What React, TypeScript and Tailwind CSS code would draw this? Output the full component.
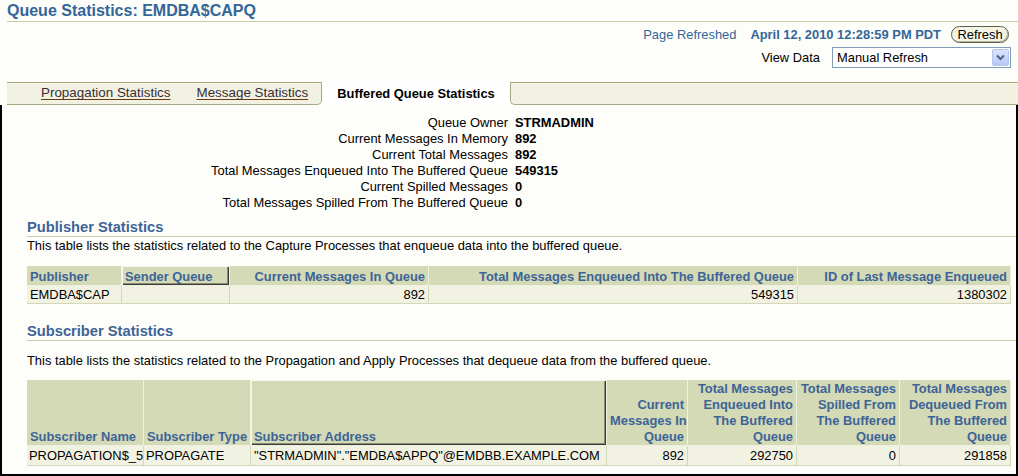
import React from "react";

const infoRows: [string, string][] = [
  ["Queue Owner", "STRMADMIN"],
  ["Current Messages In Memory", "892"],
  ["Current Total Messages", "892"],
  ["Total Messages Enqueued Into The Buffered Queue", "549315"],
  ["Current Spilled Messages", "0"],
  ["Total Messages Spilled From The Buffered Queue", "0"],
];

const th =
  "bg-[#d4d9b6] text-[#3d6497] font-bold px-[3px] border-r border-b border-[#eef0e0] align-bottom leading-[16px] whitespace-nowrap overflow-hidden";
const thRaised =
  "shadow-[inset_1px_1px_0_#f8f8f0,inset_-1px_-1px_0_#3a3a3a,inset_-2px_-2px_0_#8c8c74]";
const td =
  "bg-[#f2f2e2] px-[3px] border-r border-b border-[#d3d8b8] leading-[16px] whitespace-nowrap overflow-hidden";

function SectionHeading({ title }: { title: string }) {
  return (
    <div className="h-[19px] border-b border-[#c9cfa6] text-[14.7px] font-bold leading-[18px] text-[#3d6497]">
      {title}
    </div>
  );
}

export default function App() {
  return (
    <div className="w-[1018px] h-[476px] overflow-hidden bg-[#fdfdf9] font-['Liberation_Sans',Arial,sans-serif] text-[12.9px] text-black">
      {/* title */}
      <div className="pl-[7px]">
        <h1 className="h-[22px] border-b border-[#c9cfa6] text-[16px] font-bold leading-[21px] text-[#336699]">
          Queue Statistics: EMDBA$CAPQ
        </h1>
      </div>

      {/* refresh row */}
      <div className="mt-[4px] flex h-[17px] items-center justify-end pr-[9px]">
        <span className="text-[#336699]">Page Refreshed</span>
        <span className="ml-[14px] font-bold text-[#336699]">April 12, 2010 12:28:59 PM PDT</span>
        <button className="ml-[10px] h-[17px] w-[58px] rounded-full border border-[#5c5c48] bg-[#f4f4e6] text-[12.9px] leading-[14px] text-black shadow-[inset_-1px_-1px_0_#b9b99c]">
          Refresh
        </button>
      </div>

      {/* view data row */}
      <div className="mt-[4px] flex h-[21px] items-center justify-end pr-[7px]">
        <span>View Data</span>
        <div className="ml-[12px] flex h-[21px] w-[179px] items-center justify-between border border-[#7f9db9] bg-white pl-[4px] pr-[1px]">
          <span>Manual Refresh</span>
          <span className="flex h-[17px] w-[17px] items-center justify-center rounded-[2px] border border-[#b6c6ee] bg-gradient-to-b from-[#dbe6fd] to-[#b4c8f6]">
            <svg width="9" height="7" viewBox="0 0 9 7">
              <path d="M1 1.5 L4.5 5 L8 1.5" fill="none" stroke="#4d6185" strokeWidth="2" />
            </svg>
          </span>
        </div>
      </div>

      {/* tab bar */}
      <div className="mt-[14px] ml-[7px] flex h-[23px]">
        <div className="flex w-[315px] items-center gap-[26px] rounded-br-[5px] border-t border-r border-b border-[#a9a983] bg-[#f2f2e2] pl-[34px] text-[13.4px]">
          <span className="text-[#3a2e36] underline decoration-[#6b3a10] underline-offset-2">
            Propagation Statistics
          </span>
          <span className="text-[#3a2e36] underline decoration-[#6b3a10] underline-offset-2">
            Message Statistics
          </span>
        </div>
        <div className="flex w-[188px] items-center justify-center bg-white font-bold">
          Buffered Queue Statistics
        </div>
        <div className="flex-1 rounded-bl-[5px] border-t border-l border-b border-[#a9a983] bg-[#f2f2e2]" />
      </div>

      {/* content */}
      <div className="h-[371px] border-r-2 border-b-2 border-l-2 border-black pt-[10px]">
        <div className="grid grid-cols-[506px_1fr] gap-x-[7px] leading-[16px]">
          {infoRows.map(([label, value]) => (
            <React.Fragment key={label}>
              <div className="text-right">{label}</div>
              <div className="font-bold">{value}</div>
            </React.Fragment>
          ))}
        </div>

        <div className="pl-[25px]">
          <div className="mt-[7px]">
            <SectionHeading title="Publisher Statistics" />
          </div>
          <p className="mt-[1px] leading-[16px]">
            This table lists the statistics related to the Capture Processes that enqueue data into the buffered queue.
          </p>

          <table className="mt-[12px] w-[984px] table-fixed border-separate border-spacing-0">
            <colgroup>
              <col className="w-[95px]" />
              <col className="w-[108px]" />
              <col className="w-[199px]" />
              <col className="w-[369px]" />
              <col className="w-[213px]" />
            </colgroup>
            <thead>
              <tr className="h-[20px]">
                <th className={`${th} text-left`}>Publisher</th>
                <th className={`${th} ${thRaised} text-left`}>Sender Queue</th>
                <th className={`${th} text-right`}>Current Messages In Queue</th>
                <th className={`${th} text-right`}>Total Messages Enqueued Into The Buffered Queue</th>
                <th className={`${th} text-right`}>ID of Last Message Enqueued</th>
              </tr>
            </thead>
            <tbody>
              <tr className="h-[18px]">
                <td className={td}>EMDBA$CAP</td>
                <td className={td}></td>
                <td className={`${td} text-right`}>892</td>
                <td className={`${td} text-right`}>549315</td>
                <td className={`${td} text-right`}>1380302</td>
              </tr>
            </tbody>
          </table>

          <div className="mt-[18px]">
            <SectionHeading title="Subscriber Statistics" />
          </div>
          <p className="mt-[12px] leading-[16px]">
            This table lists the statistics related to the Propagation and Apply Processes that dequeue data from the buffered queue.
          </p>

          <table className="mt-[11px] w-[984px] table-fixed border-separate border-spacing-0">
            <colgroup>
              <col className="w-[117px]" />
              <col className="w-[107px]" />
              <col className="w-[356px]" />
              <col className="w-[81px]" />
              <col className="w-[109px]" />
              <col className="w-[103px]" />
              <col className="w-[111px]" />
            </colgroup>
            <thead>
              <tr className="h-[66px]">
                <th className={`${th} text-left`}>Subscriber Name</th>
                <th className={`${th} text-left`}>Subscriber Type</th>
                <th className={`${th} ${thRaised} text-left`}>Subscriber Address</th>
                <th className={`${th} text-right`}>
                  Current
                  <br />
                  Messages In
                  <br />
                  Queue
                </th>
                <th className={`${th} text-right`}>
                  Total Messages
                  <br />
                  Enqueued Into
                  <br />
                  The Buffered
                  <br />
                  Queue
                </th>
                <th className={`${th} text-right`}>
                  Total Messages
                  <br />
                  Spilled From
                  <br />
                  The Buffered
                  <br />
                  Queue
                </th>
                <th className={`${th} text-right`}>
                  Total Messages
                  <br />
                  Dequeued From
                  <br />
                  The Buffered
                  <br />
                  Queue
                </th>
              </tr>
            </thead>
            <tbody>
              <tr className="h-[20px]">
                <td className={`${td} pl-[2px]`}>PROPAGATION$_5</td>
                <td className={`${td} pl-[2px]`}>PROPAGATE</td>
                <td className={td}>"STRMADMIN"."EMDBA$APPQ"@EMDBB.EXAMPLE.COM</td>
                <td className={`${td} text-right`}>892</td>
                <td className={`${td} text-right`}>292750</td>
                <td className={`${td} text-right`}>0</td>
                <td className={`${td} text-right`}>291858</td>
              </tr>
            </tbody>
          </table>
        </div>
      </div>
    </div>
  );
}
